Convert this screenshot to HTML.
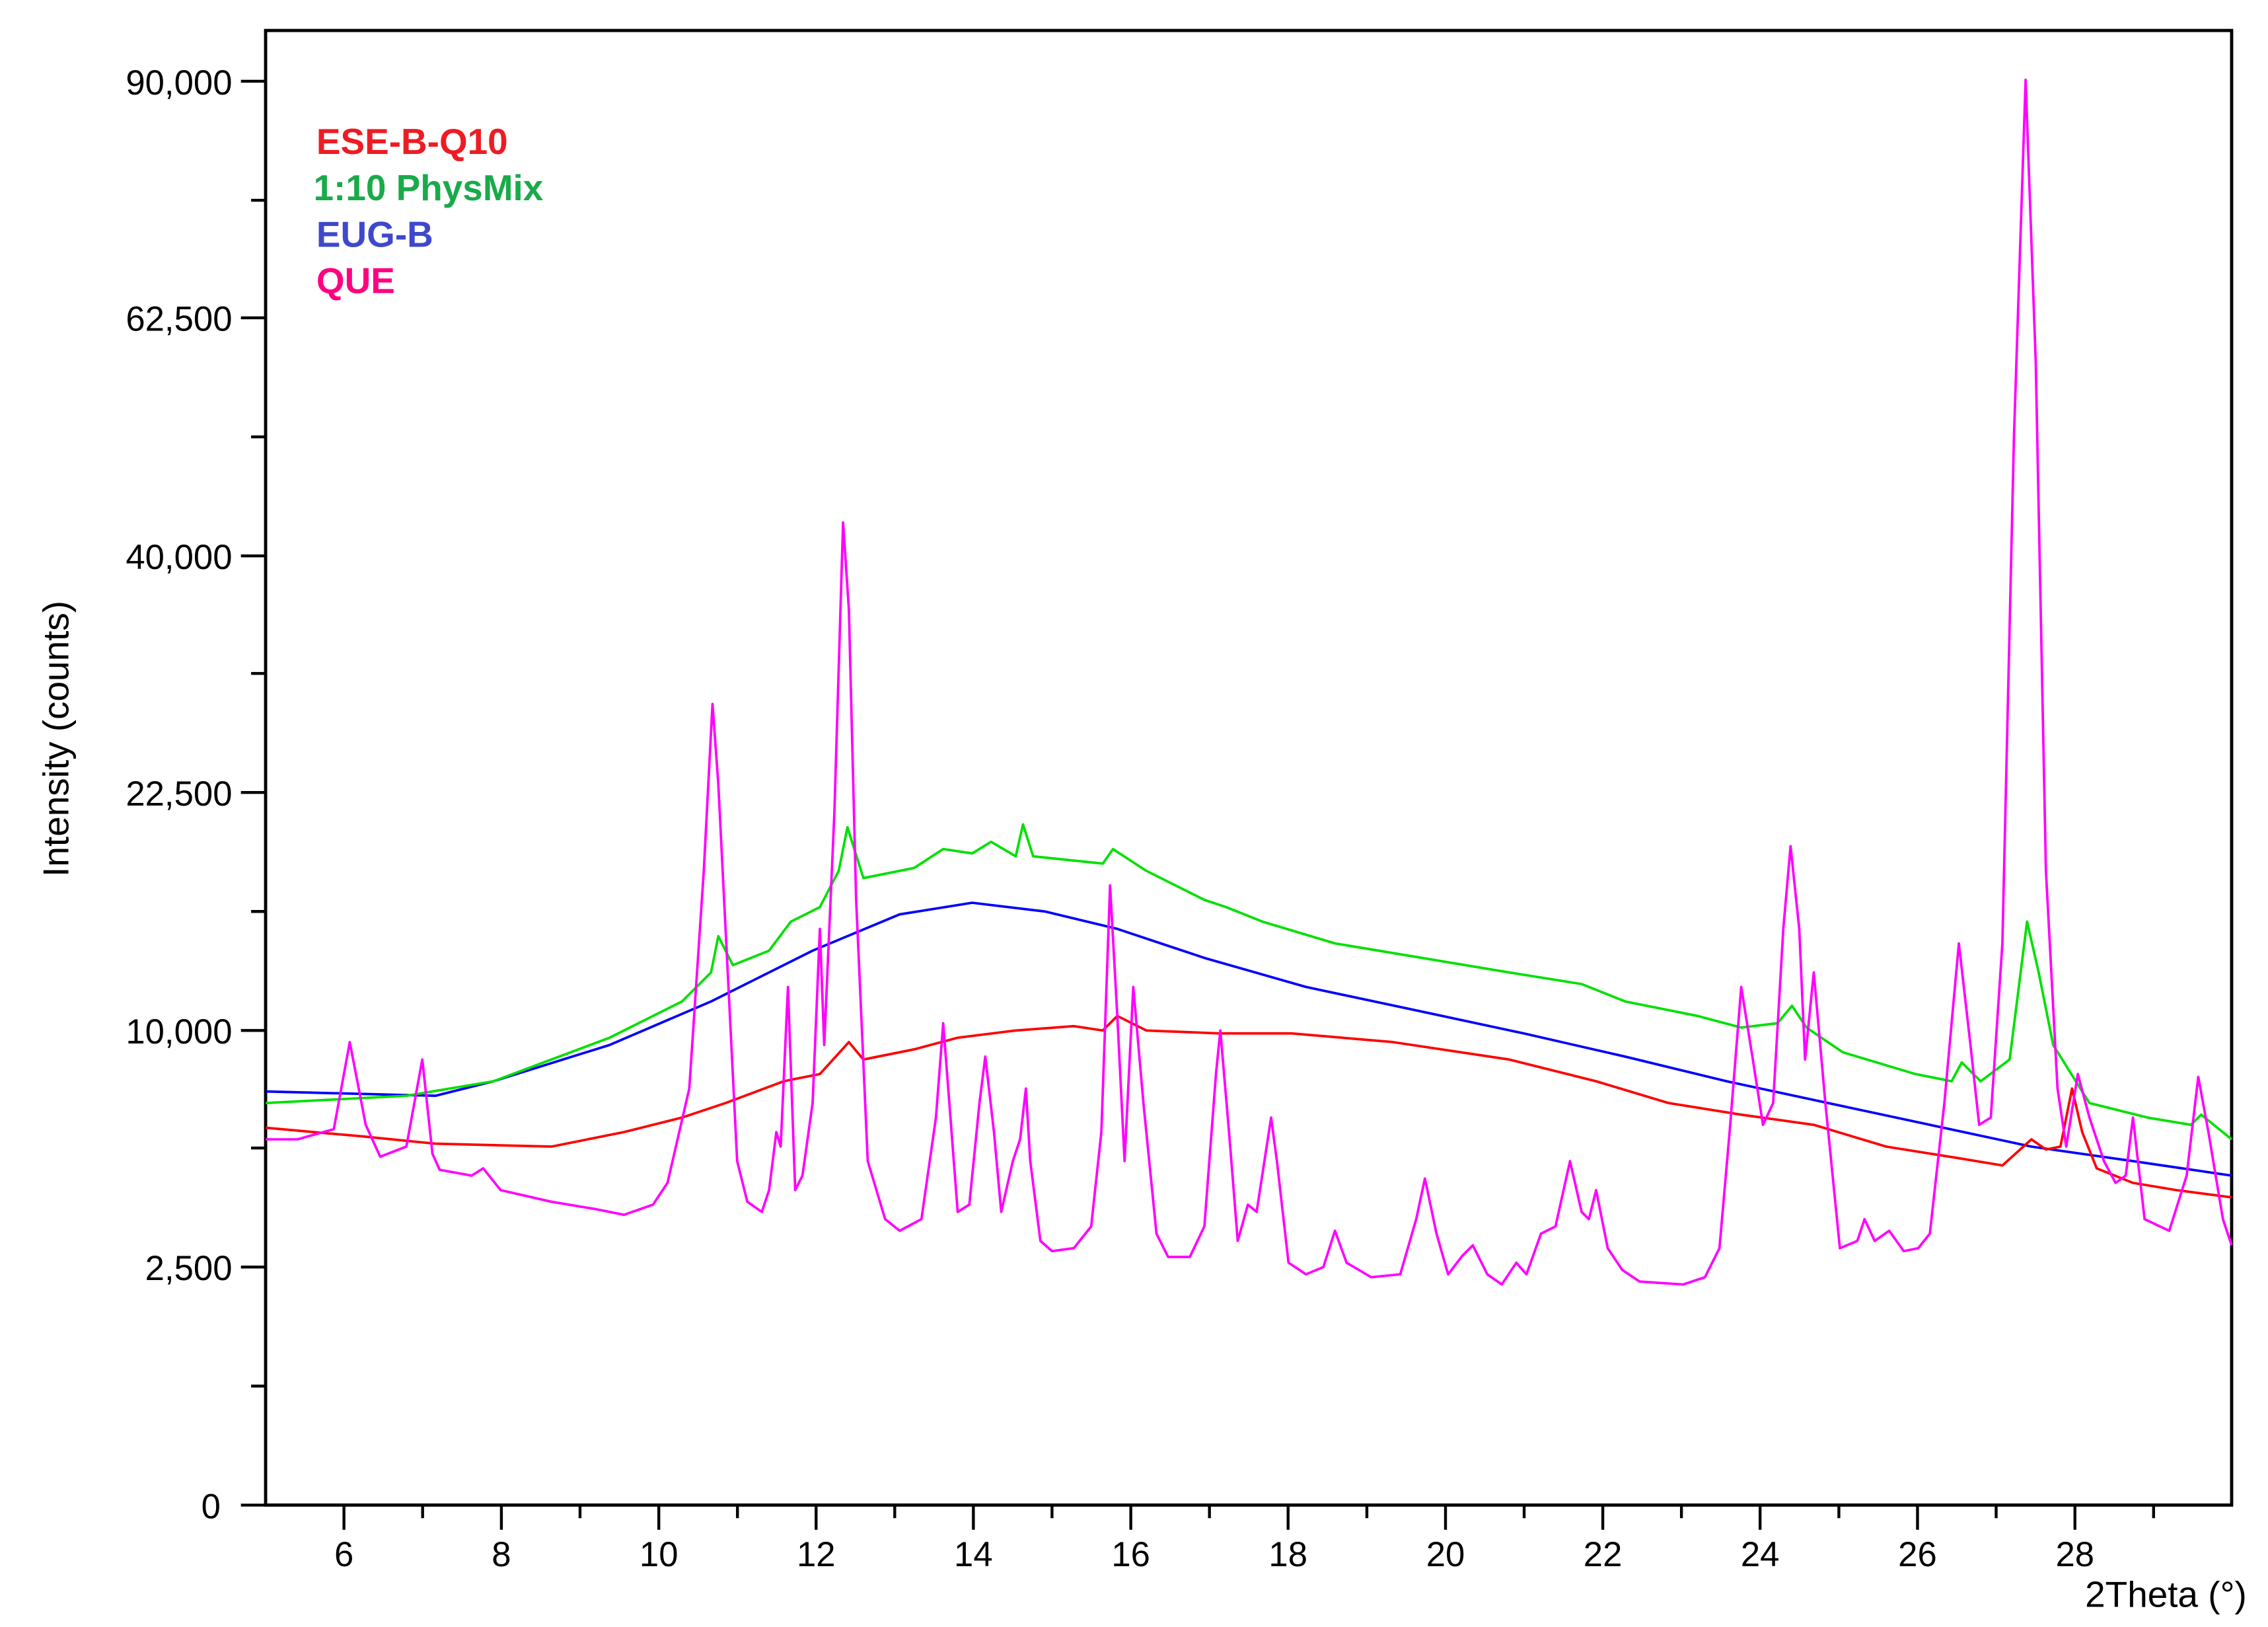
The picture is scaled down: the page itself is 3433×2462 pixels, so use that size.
<!DOCTYPE html>
<html><head><meta charset="utf-8"><style>
html,body{margin:0;padding:0;background:#fff;}
svg{display:block;}
text{font-family:"Liberation Sans",Arial,sans-serif;}
</style></head><body>
<svg width="3433" height="2462" viewBox="0 0 1563 1121" xmlns="http://www.w3.org/2000/svg">
<rect width="1563" height="1121" fill="#fff"/>
<rect x="183" y="21" width="1355" height="1016" fill="none" stroke="#000" stroke-width="2.2"/>
<g stroke="#000" stroke-width="2">
<line x1="166" y1="56" x2="183" y2="56"/><line x1="173" y1="138" x2="183" y2="138"/>
<line x1="166" y1="219" x2="183" y2="219"/><line x1="173" y1="301" x2="183" y2="301"/>
<line x1="166" y1="383" x2="183" y2="383"/><line x1="173" y1="464" x2="183" y2="464"/>
<line x1="166" y1="546" x2="183" y2="546"/><line x1="173" y1="628" x2="183" y2="628"/>
<line x1="166" y1="710" x2="183" y2="710"/><line x1="173" y1="791" x2="183" y2="791"/>
<line x1="166" y1="873" x2="183" y2="873"/><line x1="173" y1="955" x2="183" y2="955"/>
<line x1="166" y1="1037" x2="183" y2="1037"/>
</g>
<g font-size="24" text-anchor="end" fill="#000">
<text x="160" y="65">90,000</text><text x="160" y="228">62,500</text>
<text x="160" y="392">40,000</text><text x="160" y="555">22,500</text>
<text x="160" y="719">10,000</text><text x="160" y="882">2,500</text>
<text x="152" y="1046">0</text>
</g>
<g stroke="#000" stroke-width="2">
<line x1="237" y1="1037" x2="237" y2="1054"/><line x1="345.5" y1="1037" x2="345.5" y2="1054"/>
<line x1="454" y1="1037" x2="454" y2="1054"/><line x1="562.4" y1="1037" x2="562.4" y2="1054"/>
<line x1="670.8" y1="1037" x2="670.8" y2="1054"/><line x1="779.3" y1="1037" x2="779.3" y2="1054"/>
<line x1="887.7" y1="1037" x2="887.7" y2="1054"/><line x1="996.2" y1="1037" x2="996.2" y2="1054"/>
<line x1="1104.6" y1="1037" x2="1104.6" y2="1054"/><line x1="1213" y1="1037" x2="1213" y2="1054"/>
<line x1="1321.5" y1="1037" x2="1321.5" y2="1054"/><line x1="1430" y1="1037" x2="1430" y2="1054"/>
<line x1="291.2" y1="1037" x2="291.2" y2="1046"/><line x1="399.7" y1="1037" x2="399.7" y2="1046"/>
<line x1="508.2" y1="1037" x2="508.2" y2="1046"/><line x1="616.6" y1="1037" x2="616.6" y2="1046"/>
<line x1="725" y1="1037" x2="725" y2="1046"/><line x1="833.5" y1="1037" x2="833.5" y2="1046"/>
<line x1="942" y1="1037" x2="942" y2="1046"/><line x1="1050.4" y1="1037" x2="1050.4" y2="1046"/>
<line x1="1158.8" y1="1037" x2="1158.8" y2="1046"/><line x1="1267.3" y1="1037" x2="1267.3" y2="1046"/>
<line x1="1375.7" y1="1037" x2="1375.7" y2="1046"/><line x1="1484.2" y1="1037" x2="1484.2" y2="1046"/>
</g>
<g font-size="24" text-anchor="middle" fill="#000">
<text x="237" y="1079">6</text><text x="345.5" y="1079">8</text><text x="454" y="1079">10</text>
<text x="562.4" y="1079">12</text><text x="670.8" y="1079">14</text><text x="779.3" y="1079">16</text>
<text x="887.7" y="1079">18</text><text x="996.2" y="1079">20</text><text x="1104.6" y="1079">22</text>
<text x="1213" y="1079">24</text><text x="1321.5" y="1079">26</text><text x="1430" y="1079">28</text>
</g>
<text x="1437" y="1107" font-size="25">2Theta (°)</text>
<text transform="translate(47,509) rotate(-90)" font-size="25" text-anchor="middle">Intensity (counts)</text>
<g font-size="25" font-weight="bold">
<text x="218" y="106" fill="#ed1c24">ESE-B-Q10</text>
<text x="216" y="138" fill="#1aaa4a">1:10 PhysMix</text>
<text x="218" y="170" fill="#3f48cc">EUG-B</text>
<text x="218" y="202" fill="#ff0080">QUE</text>
</g>
<g fill="none" stroke-width="1.7" stroke-linejoin="round">
<polyline stroke="#0000ff" points="183,752 300,755 340,745 420,720 490,690 560,655 620,630 670,622 720,628 770,640 830,660 900,680 980,697 1050,712 1120,728 1190,745 1260,760 1330,775 1400,790 1470,800 1538,810"/>
<polyline stroke="#00e000" points="183,760 280,755 340,745 420,715 470,690 490,670 495,645 505,665 530,655 545,635 565,625 578,600 584,570 595,605 630,598 650,585 670,588 683,580 700,590 705,568 712,590 760,595 767,585 790,600 830,620 845,625 870,635 920,650 980,660 1040,670 1090,678 1120,690 1170,700 1200,708 1225,705 1235,693 1245,708 1270,725 1320,740 1345,745 1352,732 1365,745 1385,730 1397,635 1405,670 1415,720 1440,760 1480,770 1510,775 1517,768 1538,785"/>
<polyline stroke="#ff0000" points="183,777 250,783 300,788 380,790 430,780 470,770 500,760 540,745 565,740 585,718 595,730 630,723 660,715 700,710 740,707 760,710 770,700 790,710 840,712 890,712 960,718 1040,730 1100,745 1150,760 1200,768 1250,775 1300,790 1350,798 1380,803 1400,785 1410,792 1420,790 1428,750 1435,780 1445,805 1470,815 1500,820 1538,825"/>
<polyline stroke="#ff00ff" points="183,785 205,785 230,778 241,718 252,775 262,797 280,790 291,730 298,795 303,806 325,810 333,805 345,820 380,828 410,833 430,837 450,830 460,815 475,750 485,600 491,485 495,540 502,680 508,800 515,828 525,835 530,820 535,780 538,790 543,680 548,820 553,810 560,760 565,640 568,720 575,560 581,360 585,420 590,620 598,800 610,840 620,848 635,840 645,770 650,705 655,770 660,835 668,830 675,760 679,728 685,780 690,835 698,800 703,785 707,750 710,800 717,855 725,862 740,860 752,845 759,780 765,610 770,700 775,800 781,680 788,760 797,850 805,866 820,866 830,845 838,740 841,710 847,780 853,855 860,830 866,835 876,770 880,800 888,870 900,878 912,873 920,848 928,870 945,880 965,878 976,840 982,812 990,850 998,878 1008,865 1015,858 1025,878 1035,885 1045,870 1052,878 1062,850 1072,845 1082,800 1090,835 1095,840 1100,820 1108,860 1118,875 1130,883 1160,885 1175,880 1185,860 1192,780 1200,680 1208,730 1215,775 1222,760 1229,640 1234,583 1240,640 1244,730 1250,670 1258,760 1268,860 1280,855 1285,840 1292,855 1302,848 1312,862 1322,860 1330,850 1340,760 1350,650 1358,720 1364,775 1372,770 1380,650 1388,300 1396,55 1403,250 1410,600 1418,750 1424,790 1432,740 1440,770 1450,800 1458,815 1465,810 1470,770 1478,840 1495,848 1507,810 1515,742 1522,780 1532,840 1538,858"/>
</g>
</svg>
</body></html>
